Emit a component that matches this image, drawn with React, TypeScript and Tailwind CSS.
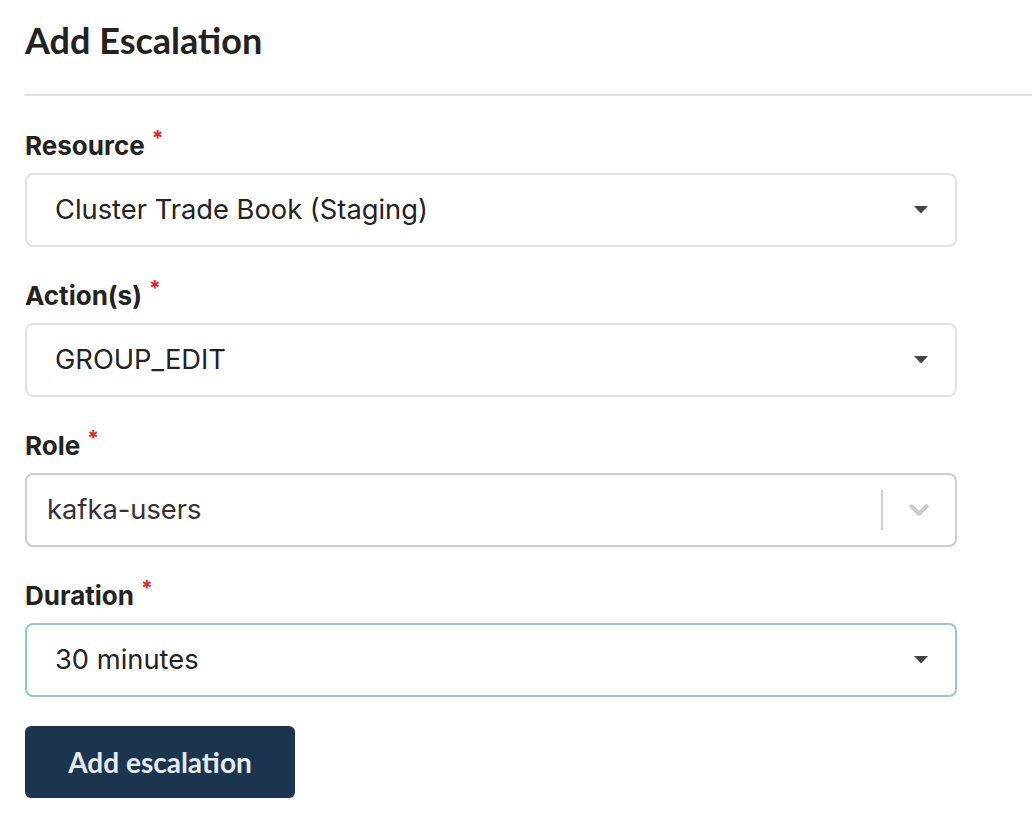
import { ChevronDown } from "lucide-react";

const Caret = () => (
  <svg width="14" height="8" viewBox="0 0 14 8" className="shrink-0">
    <path d="M0 0 H14 L7 7.5 Z" fill="#444444" />
  </svg>
);

const Label = ({ text }: { text: string }) => (
  <div className="h-[36px] mb-[9px] flex items-start font-['Inter',sans-serif] text-[26px] leading-[36px] font-bold text-[#222222]">
    {text}
    <span className="ml-[7px] text-[21px] leading-[22px] text-[#e02424]">*</span>
  </div>
);

const NativeSelect = ({ value, focused }: { value: string; focused?: boolean }) => (
  <div
    className={
      focused
        ? "h-[74px] rounded-[8px] border-2 border-[#93c5d6] bg-white pl-[28px] pr-[27px] flex items-center justify-between"
        : "h-[74px] rounded-[8px] border-2 border-[#e2e2e2] bg-white pl-[28px] pr-[27px] flex items-center justify-between"
    }
  >
    <span className="font-['Inter',sans-serif] text-[27.3px] text-[#222222]">{value}</span>
    <Caret />
  </div>
);

const ComboSelect = ({ value }: { value: string }) => (
  <div className="h-[74px] rounded-[8px] border-2 border-[#cccccc] bg-white pl-[20px] flex items-center">
    <span className="flex-1 font-['Inter',sans-serif] text-[27.3px] text-[#333333]">{value}</span>
    <div className="w-[2px] h-[40px] bg-[#cccccc]" />
    <div className="w-[72px] flex items-center justify-center">
      <ChevronDown size={30} strokeWidth={3.2} color="#cccccc" />
    </div>
  </div>
);

export default function App() {
  return (
    <div className="w-[1032px] h-[830px] bg-white overflow-hidden">
      <h1 className="pl-[25px] pt-[19px] font-['Lato',sans-serif] text-[36px] leading-[1.2] font-bold text-[#222222]">
        Add Escalation
      </h1>
      <div className="ml-[25px] mt-[32px] h-[2px] bg-[#e0e0e0]" />
      <div className="pl-[25px] w-[957px] pt-[32px] flex flex-col">
        <Label text="Resource" />
        <NativeSelect value="Cluster Trade Book (Staging)" />
        <div className="mt-[31px]">
          <Label text="Action(s)" />
          <NativeSelect value="GROUP_EDIT" />
        </div>
        <div className="mt-[31px]">
          <Label text="Role" />
          <ComboSelect value="kafka-users" />
        </div>
        <div className="mt-[31px]">
          <Label text="Duration" />
          <NativeSelect value="30 minutes" focused />
        </div>
        <button className="mt-[29px] w-[270px] h-[72px] rounded-[6px] bg-[#1b354f] font-['Lato',sans-serif] text-[28px] font-bold text-[#e6ebf0]">
          Add escalation
        </button>
      </div>
    </div>
  );
}
